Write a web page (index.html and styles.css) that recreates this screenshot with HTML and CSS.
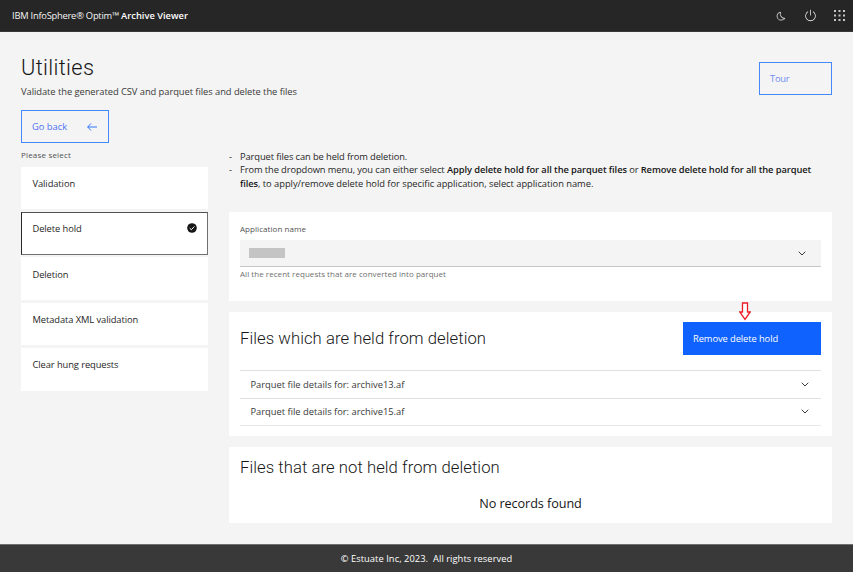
FILE: index.html
```html
<!DOCTYPE html>
<html lang="en">
<head>
<meta charset="utf-8">
<title>Archive Viewer - Utilities</title>
<link rel="stylesheet" href="styles.css">
</head>
<body>
<header class="topbar">
  <div class="brand">IBM InfoSphere® Optim™ <strong>Archive Viewer</strong></div>
  <nav class="tools">
    <svg class="tool-moon" viewBox="0 0 32 32"><path d="M13.5 5.4a15.1 15.1 0 0 0 13.6 19.3 11.1 11.1 0 0 1-8 3.2H18A11.1 11.1 0 0 1 13.5 5.4M14.5 3a1 1 0 0 0-.2 0A13.1 13.1 0 0 0 17.900 29.800 13 13 0 0 0 29.100 24.300 1 1 0 0 0 28.200 22.700 13.200 13.200 0 0 1 15.400 4.500 1 1 0 0 0 14.500 3Z"/></svg>
    <svg class="tool-power" viewBox="0 0 32 32"><path d="M22.500 5.700l-1 1.700A11 11 0 1 1 10.500 7.400l-1-1.700A13 13 0 1 0 22.500 5.700Z"/><path d="M15 2h2v14h-2z"/></svg>
    <svg class="tool-apps" viewBox="0 0 11 11"><path d="M0 0h2v2H0zM4.500 0h2v2h-2zM9 0h2v2H9zM0 4.500h2v2H0zM4.500 4.500h2v2h-2zM9 4.500h2v2H9zM0 9h2v2H0zM4.500 9h2v2h-2zM9 9h2v2H9z"/></svg>
  </nav>
</header>

<main class="page">
  <div class="page-head">
    <div>
      <h1>Utilities</h1>
      <p class="subtitle">Validate the generated CSV and parquet files and delete the files</p>
    </div>
    <button class="btn btn-tour">Tour</button>
  </div>

  <div class="columns">
    <aside class="side">
      <button class="btn btn-back">Go back
        <svg class="arrow-left" viewBox="0 0 10 8"><path d="M4 .5.700 4 4 7.500M.700 4H10"/></svg>
      </button>
      <div class="side-label">Please select</div>
      <div class="tiles">
        <div class="tile">Validation</div>
        <div class="tile selected">Delete hold
          <svg class="check" viewBox="0 0 10 10"><circle cx="5" cy="5" r="4.800"/><path d="M2.700 5.200 4.300 6.700 7.400 3.500"/></svg>
        </div>
        <div class="tile">Deletion</div>
        <div class="tile">Metadata XML validation</div>
        <div class="tile">Clear hung requests</div>
      </div>
    </aside>

    <section class="content">
      <ul class="notes">
        <li>Parquet files can be held from deletion.</li>
        <li>From the dropdown menu, you can either select <strong>Apply delete hold for all the parquet files</strong> or <strong>Remove delete hold for all the parquet<br>files</strong><span class="notes-tail">, to apply/remove delete hold for specific application, select application name.</span></li>
      </ul>

      <div class="card card-select">
        <div class="field-label">Application name</div>
        <div class="select"><span class="redacted"></span>
          <svg class="chevron" viewBox="0 0 8 5"><path d="M.700.700 4 4 7.300.700"/></svg>
        </div>
        <div class="helper">All the recent requests that are converted into parquet</div>
      </div>

      <div class="card card-held">
        <div class="card-head">
          <h2>Files which are held from deletion</h2>
          <div class="action">
            <button class="btn btn-primary">Remove delete hold</button>
            <svg class="pointer" viewBox="0 0 12 19"><path d="M3.500 1h5v9h2.700L6 17.300.800 10h2.700z"/></svg>
          </div>
        </div>
        <div class="accordion">
          <div class="row">Parquet file details for: archive13.af
            <svg class="chevron" viewBox="0 0 8 5"><path d="M.700.700 4 4 7.300.700"/></svg></div>
          <div class="row">Parquet file details for: archive15.af
            <svg class="chevron" viewBox="0 0 8 5"><path d="M.700.700 4 4 7.300.700"/></svg></div>
        </div>
      </div>

      <div class="card card-free">
        <h2>Files that are not held from deletion</h2>
        <p class="empty">No records found</p>
      </div>
    </section>
  </div>
</main>

<footer class="footer">© Estuate Inc, 2023.&nbsp; All rights reserved</footer>
</body>
</html>
```
FILE: styles.css
```css
* { box-sizing: border-box; }
body {
  margin: 0;
  width: 853px;
  height: 572px;
  overflow: hidden;
  display: flex;
  flex-direction: column;
  background: #f4f4f4;
  color: #161616;
  font-family: "Open Sans", "Liberation Sans", sans-serif;
  font-size: 9.33px;
  line-height: 13.33px;
  letter-spacing: -0.045px;
}
h1, h2, p, ul { margin: 0; padding: 0; }
h1, h2 { font-family: Roboto, "Liberation Sans", sans-serif; font-weight: 300; }
strong { font-weight: 600; }
svg { display: block; flex: none; }

.topbar {
  flex: none;
  display: flex;
  justify-content: space-between;
  align-items: center;
  height: 32px;
  padding: 0 8px 0 12px;
  background: #262626;
  border-bottom: 1px solid #393939;
  color: #f4f4f4;
}
.brand { letter-spacing: -0.23px; }
.brand strong { letter-spacing: 0; color: #fff; }
.tools { display: flex; align-items: center; fill: #e0e0e0; }
.tool-moon { width: 10px; height: 10px; margin-right: 18px; stroke: #e0e0e0; stroke-width: 0.8; }
.tool-power { width: 13px; height: 13px; margin-right: 17px; }
.tool-apps { width: 11px; height: 11px; fill: #c6c6c6; }

.page { flex: 1; padding: 0 21px; }
.page-head { display: flex; justify-content: space-between; height: 78px; }
h1 {
  margin-top: 22px;
  font-size: 21.8px;
  line-height: 28px;
  letter-spacing: 0.34px;
}
.subtitle { margin-top: 3px; color: #393939; }

.btn {
  display: flex;
  align-items: center;
  padding: 0 0 0 10px;
  border: 1px solid #4589ff;
  border-radius: 0;
  background: transparent;
  color: #4c72f5;
  font: inherit;
  letter-spacing: 0;
  text-align: left;
}
.btn-tour {
  width: 73px;
  height: 33px;
  margin-top: 30px;
  color: #6e8cf5;
  letter-spacing: -0.2px;
}
.btn-back {
  width: 88px;
  height: 33px;
  justify-content: space-between;
  padding-right: 11px;
}
.arrow-left { width: 10px; height: 8px; fill: none; stroke: #2f74ff; stroke-width: 1; }
.btn-primary {
  width: 138px;
  height: 32.500px;
  border: 0;
  background: #0f62fe;
  color: #fff;
  letter-spacing: -0.08px;
}

.columns { display: flex; gap: 21px; }
.side { width: 187px; }
.side-label {
  margin: 5px 0 5.67px;
  font-size: 8px;
  line-height: 13px;
  letter-spacing: 0.18px;
  color: #525252;
}
.tiles { display: flex; flex-direction: column; gap: 2.67px; }
.tile {
  display: flex;
  justify-content: space-between;
  height: 42.67px;
  padding: 9.3px 10.500px 0 10.500px;
  border: 1px solid #fff;
  background: #fff;
  color: #262626;
  letter-spacing: -0.08px;
}
.tile.selected { border-color: #525252 #6f6f6f #6f6f6f #262626; }
.check { width: 10px; height: 10px; margin-top: 0.700px; fill: #161616; }
.check path { fill: none; stroke: #fff; stroke-width: 1; }

.content { flex: 1; padding-top: 40px; }
.notes {
  list-style: none;
  height: 62px;
  padding-left: 11px;
  letter-spacing: -0.1px;
  white-space: nowrap;
  color: #262626;
}
.notes li::before { content: "-"; float: left; margin-left: -11px; }
.notes strong { letter-spacing: -0.09px; color: #161616; }
.notes-tail { letter-spacing: -0.03px; }

.card { padding: 0 11px; background: #fff; }
.card-select { height: 89px; padding-top: 11px; }
.field-label {
  font-size: 8px;
  line-height: 12px;
  letter-spacing: 0.056px;
  color: #525252;
}
.select {
  display: flex;
  align-items: center;
  justify-content: space-between;
  height: 27px;
  margin-top: 5px;
  padding: 0 15px 0 9px;
  background: #f4f4f4;
  border-bottom: 1px solid #c6c6c6;
}
.redacted { width: 36px; height: 10px; background: #c4c4c4; }
.chevron { width: 8px; height: 5px; fill: none; stroke: #262626; stroke-width: 0.9; }
.helper {
  margin-top: 0.500px;
  font-size: 8px;
  line-height: 12px;
  letter-spacing: 0.045px;
  color: #6f6f6f;
}

h2 { font-size: 16.67px; line-height: 22px; letter-spacing: 0.06px; }
.card-held { height: 124px; margin-top: 11px; padding-top: 10px; }
.card-head { display: flex; justify-content: space-between; height: 48px; }
.card-head h2 { margin-top: 6px; }
.action { position: relative; }
.pointer {
  position: absolute;
  left: 56px;
  top: -20px;
  width: 12px;
  height: 19px;
  fill: #fff;
  stroke: #ed1c24;
  stroke-width: 1.3;
}
.accordion { border-bottom: 1px solid #e8e8e8; }
.row {
  display: flex;
  align-items: center;
  justify-content: space-between;
  height: 27.500px;
  padding: 0 12px 0 10.500px;
  border-top: 1px solid #e0e0e0;
  letter-spacing: 0;
  color: #393939;
}
.card-free { height: 76px; margin-top: 11px; padding-top: 10px; }
.empty {
  margin-top: 15px;
  font-size: 12.67px;
  line-height: 18px;
  letter-spacing: -0.08px;
  text-align: center;
}

.footer {
  flex: none;
  height: 28px;
  border-top: 1px solid #6f6f6f;
  background: #393939;
  color: #fff;
  line-height: 27px;
  letter-spacing: 0.046px;
  text-align: center;
}
```
